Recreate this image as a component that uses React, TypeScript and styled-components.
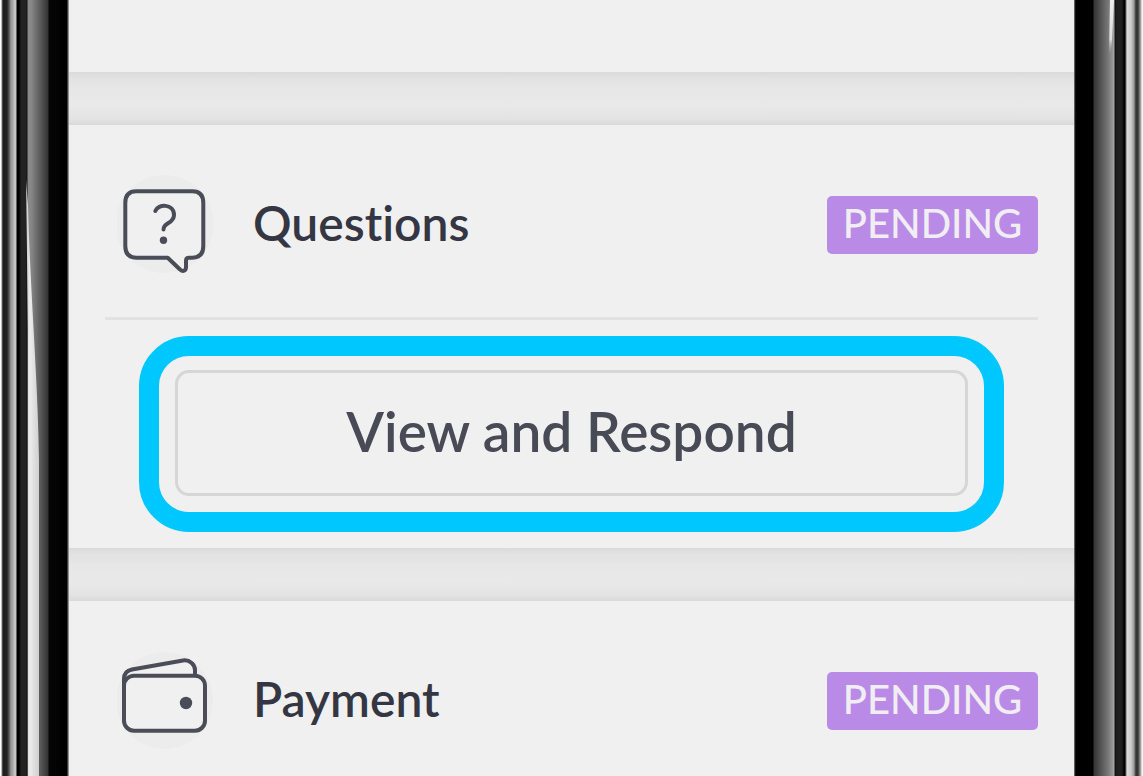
import React from "react";
import styled, { createGlobalStyle } from "styled-components";

const GlobalStyle = createGlobalStyle`
  * { box-sizing: border-box; }
  body {
    margin: 0;
    background: #fff;
    font-family: Lato, "Liberation Sans", sans-serif;
    font-variant-ligatures: none;
  }
`;

const Phone = styled.div`
  display: flex;
  min-height: 100vh;
  overflow: hidden;
`;

const Bezel = styled.div<{ $side: "left" | "right" }>`
  position: relative;
  flex: 0 0 69px;
  background: ${({ $side }) =>
    $side === "left"
      ? `linear-gradient(to right,
          #fff 0 1px, #777 2px, #1c1c1c 3px, #222 7px, #555 9px, #999 11px, #a8a8a8 13px, #ccc 15px, #bbb 16px,
          #000 17px 19px, #222 21px 26px, #111 27px, #888 28px, #888 31px, #333 48px, #050505 49px, #000 67px, #777 68px, #aaa 69px)`
      : `linear-gradient(to right,
          #999 0, #222 1px, #000 2px 19px, #333 20px, #777 34px, #999 39px, #aaa 40px, #111 41px, #1f1f1f 43px 48px,
          #000 50px 51px, #ddd 53px, #ccc 57px, #999 60px, #333 62px, #383838 64px, #888 66px, #eee 68px, #fff 69px)`};
`;

const Glare = styled.svg`
  position: absolute;
  inset: 0;
  width: 100%;
  height: 100%;
`;

const Screen = styled.main`
  flex: 1;
  min-width: 0;
  display: flex;
  flex-direction: column;
  background: #f0f0f0;
`;

const PreviousCard = styled.div`
  height: 72px;
`;

const Divider = styled.div`
  height: 53px;
  background: linear-gradient(#dadada, #e2e2e2 6px, #e7e7e7 18px, #e9e9e9 34px, #e3e3e3 47px, #d9d9d9);
`;

const Card = styled.section`
  padding: 0 36px;
`;

const CardHeader = styled.header<{ $ruled?: boolean }>`
  display: flex;
  align-items: center;
  padding: 50px 0 ${({ $ruled }) => ($ruled ? 42 : 24)}px 12px;
  border-bottom: ${({ $ruled }) => ($ruled ? "3px solid #e2e2e2" : "0")};
`;

const Icon = styled.svg`
  flex: none;
  width: 100px;
  height: 100px;
`;

const Title = styled.h2`
  flex: 1;
  margin: 0 0 0 36px;
  padding-bottom: 4px;
  color: #343743;
  font-size: 48px;
  line-height: 60px;
  font-weight: 600;
`;

const Badge = styled.span`
  flex: none;
  min-width: 211px;
  padding: 0 12px 4px;
  border-radius: 5px;
  background: #ba8be6;
  color: #f1eef3;
  font-size: 40px;
  line-height: 54px;
  font-weight: 500;
  text-align: center;
`;

const Highlight = styled.div`
  margin: 16px 34px;
  padding: 14px 16px 16px;
  border: 20px solid #00c8ff;
  border-radius: 50px;
`;

const Action = styled.button`
  display: block;
  width: 100%;
  height: 126px;
  padding: 0 0 4px;
  border: 3px solid #d6d6d6;
  border-radius: 14px;
  background: transparent;
  color: #484b55;
  font: 600 55px/70px Lato, "Liberation Sans", sans-serif;
`;

const QuestionIcon = () => (
  <Icon viewBox="0 0 100 100" fill="none" stroke="#4a4d57" strokeWidth="4" strokeLinejoin="round" strokeLinecap="round" aria-hidden="true">
    <circle cx="47.5" cy="49" r="49" fill="#ececec" stroke="none" />
    <path d="M19.300 16.300H75.300Q86.300 16.300 86.300 28V71Q86.300 82.700 75.300 82.700H72Q69 82.700 69 85.700V92C69 96 66 97 63 94.500L50.700 82.700H19.300Q8.300 82.700 8.300 71V28Q8.300 16.300 19.300 16.300Z" fill="#f0f0f0" />
    <path d="M38.300 36C41 28.500 57 28.500 57 40C57 49 46.500 47 46.500 54.500" />
    <circle cx="46.500" cy="65.300" r="3.700" fill="#4a4d57" stroke="none" />
  </Icon>
);

const WalletIcon = () => (
  <Icon viewBox="0 0 100 100" fill="none" stroke="#4a4d57" strokeWidth="4" strokeLinejoin="round" strokeLinecap="round" aria-hidden="true">
    <circle cx="47.5" cy="49.5" r="48.500" fill="#ececec" stroke="none" />
    <path d="M7 36V28Q7 20 15 18.500L66 9.500C73 8.500 78 14 78 19V24" fill="#f0f0f0" />
    <rect x="7" y="24.700" width="81" height="55" rx="10" fill="#f0f0f0" />
    <circle cx="69" cy="52" r="6.200" fill="#4a4d57" stroke="none" />
  </Icon>
);

export default function App() {
  return (
    <Phone>
      <GlobalStyle />
      <Bezel $side="left">
        <Glare viewBox="0 0 69 776" preserveAspectRatio="none" aria-hidden="true">
          <defs>
            <linearGradient id="glare-left" x1="0" x2="1" y1="0" y2="0">
              <stop offset="0" stopColor="#c4c4c4" />
              <stop offset="0.3" stopColor="#ececec" />
              <stop offset="1" stopColor="#cfcfcf" />
            </linearGradient>
          </defs>
          <path d="M26 180L28 205C30 290 38 380 39 460V776H28V330Z" fill="url(#glare-left)" />
        </Glare>
      </Bezel>
      <Screen>
        <PreviousCard />
        <Divider />
        <Card>
          <CardHeader $ruled>
            <QuestionIcon />
            <Title>Questions</Title>
            <Badge>PENDING</Badge>
          </CardHeader>
          <Highlight>
            <Action type="button">View and Respond</Action>
          </Highlight>
        </Card>
        <Divider />
        <Card>
          <CardHeader>
            <WalletIcon />
            <Title>Payment</Title>
            <Badge>PENDING</Badge>
          </CardHeader>
        </Card>
      </Screen>
      <Bezel $side="right">
        <Glare viewBox="0 0 69 776" preserveAspectRatio="none" aria-hidden="true">
          <defs>
            <linearGradient id="glare-right" x1="0" x2="0" y1="0" y2="1">
              <stop offset="0" stopColor="#eee" />
              <stop offset="0.7" stopColor="#ddd" />
              <stop offset="1" stopColor="#999" stopOpacity="0" />
            </linearGradient>
          </defs>
          <path d="M36 0H40L38 40Q37 55 35 56Z" fill="url(#glare-right)" />
        </Glare>
      </Bezel>
    </Phone>
  );
}
